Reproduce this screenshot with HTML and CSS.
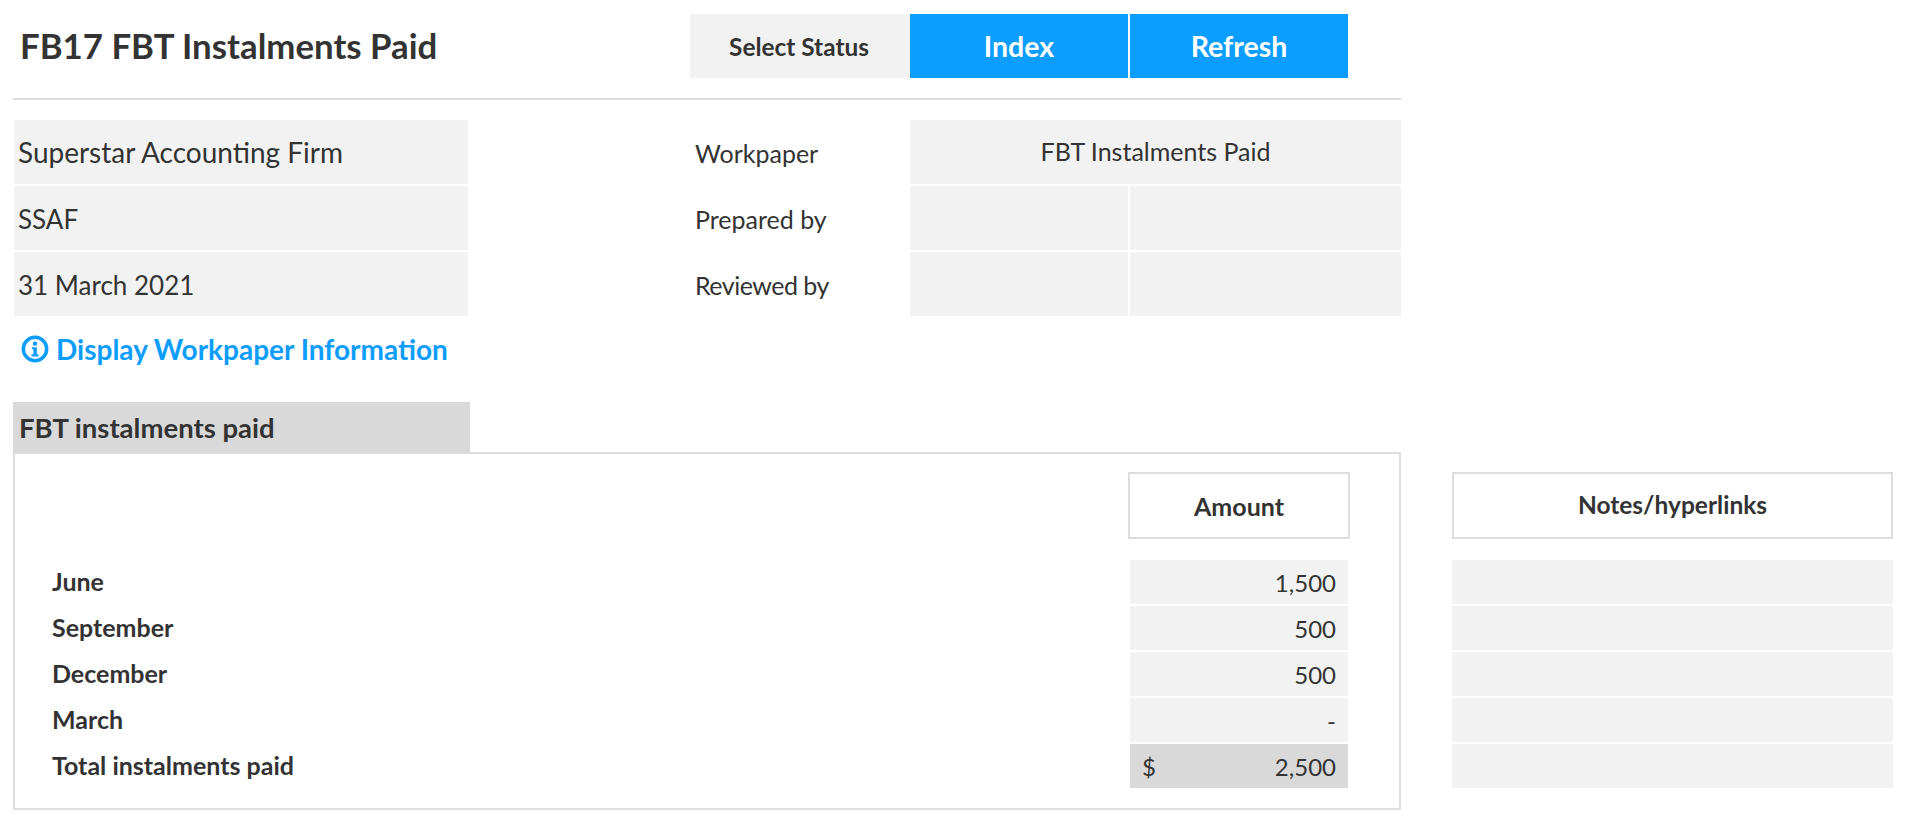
FILE: index.html
```html
<!DOCTYPE html>
<html lang="en">
<head>
    <meta charset="UTF-8">
    <meta name="viewport" content="width=device-width, initial-scale=1.0">
    <title>FB17 FBT Instalments Paid</title>
    <link rel="stylesheet" href="styles.css">
</head>
<body>
    <div class="sheet">
        <div class="header">
            <h1 class="title">FB17 FBT Instalments Paid</h1>
            <div class="status">Select Status</div>
            <div class="btn">Index</div>
            <div class="btn">Refresh</div>
        </div>

        <div class="info">
            <div class="client">
                <div class="client-cell">Superstar Accounting Firm</div>
                <div class="client-cell client-short">SSAF</div>
                <div class="client-cell client-short">31 March 2021</div>
            </div>
            <div class="signoff-labels">
                <div class="signoff-label">Workpaper</div>
                <div class="signoff-label">Prepared by</div>
                <div class="signoff-label signoff-tight">Reviewed by</div>
            </div>
            <div class="signoff">
                <div class="signoff-name">FBT Instalments Paid</div>
                <div class="signoff-cell"></div>
                <div class="signoff-cell"></div>
                <div class="signoff-cell"></div>
                <div class="signoff-cell"></div>
            </div>
        </div>

        <div class="info-link">
            <svg class="info-icon" viewBox="0 0 24 24" aria-hidden="true">
                <circle cx="12" cy="12" r="10" fill="none" stroke="#0b9dff" stroke-width="3"/>
                <circle cx="12" cy="7.4" r="1.9" fill="#0b9dff"/>
                <path d="M9.4 10.4h4.2v6.2h1.5v1.8H9v-1.8h1.6v-4.4H9.4z" fill="#0b9dff"/>
            </svg>
            Display Workpaper Information
        </div>

        <div class="section-title">FBT instalments paid</div>
        <div class="section">
            <div class="panel">
                <div class="row head-row">
                    <div class="row-label"></div>
                    <div class="head-cell amount-head">Amount</div>
                </div>
                <div class="row">
                    <div class="row-label">June</div>
                    <div class="amount">1,500</div>
                </div>
                <div class="row">
                    <div class="row-label">September</div>
                    <div class="amount">500</div>
                </div>
                <div class="row">
                    <div class="row-label">December</div>
                    <div class="amount">500</div>
                </div>
                <div class="row">
                    <div class="row-label">March</div>
                    <div class="amount">-</div>
                </div>
                <div class="row">
                    <div class="row-label">Total instalments paid</div>
                    <div class="amount total"><span>$</span><span>2,500</span></div>
                </div>
            </div>
            <div class="notes">
                <div class="head-cell notes-head">Notes/hyperlinks</div>
                <div class="note-cell"></div>
                <div class="note-cell"></div>
                <div class="note-cell"></div>
                <div class="note-cell"></div>
                <div class="note-cell"></div>
            </div>
        </div>
    </div>
</body>
</html>
```

FILE: styles.css
```css
body {
    font-family: Lato, "Open Sans", sans-serif;
    margin: 0;
    padding: 0;
    background-color: #fff;
    color: #333;
}
.sheet {
    padding: 14px 0 0 13px;
}
.header {
    display: flex;
    width: 1388px;
    height: 64px;
    padding-bottom: 20px;
    border-bottom: 2px solid #ddd;
}
.title {
    width: 677px;
    margin: 0;
    padding-left: 7px;
    box-sizing: border-box;
    font-size: 34.8px;
    font-weight: 700;
    line-height: 64px;
}
.status {
    width: 218px;
    padding-right: 2px;
    background: #f2f2f2;
    font-size: 24.4px;
    font-weight: 700;
    line-height: 66px;
    text-align: center;
}
.btn {
    width: 218px;
    margin-right: 2px;
    background: #0b9dff;
    color: #fff;
    font-size: 28.5px;
    font-weight: 700;
    line-height: 64px;
    text-align: center;
}
.info {
    display: flex;
    margin-top: 20px;
}
.client {
    display: flex;
    flex-direction: column;
    gap: 2px;
    width: 454px;
    margin: 0 222px 0 1px;
}
.client-cell {
    height: 64px;
    padding-left: 4px;
    background: #f2f2f2;
    font-size: 28px;
    line-height: 64px;
}
.client-short {
    font-size: 26px;
    line-height: 66px;
}
.signoff-labels {
    display: flex;
    flex-direction: column;
    gap: 2px;
    width: 220px;
}
.signoff-label {
    height: 64px;
    padding-left: 5px;
    font-size: 25px;
    line-height: 66px;
}
.signoff-tight {
    letter-spacing: -0.5px;
}
.signoff {
    display: grid;
    grid-template-columns: 218px 271px;
    grid-auto-rows: 64px;
    gap: 2px;
}
.signoff-name {
    grid-column: span 2;
    background: #f2f2f2;
    font-size: 25px;
    line-height: 62px;
    text-align: center;
}
.signoff-cell {
    background: #f2f2f2;
}
.info-link {
    display: flex;
    align-items: center;
    gap: 7px;
    height: 66px;
    padding-left: 8px;
    color: #0b9dff;
    font-size: 28px;
    font-weight: 700;
}
.info-icon {
    width: 28px;
    height: 28px;
}
.section-title {
    position: relative;
    z-index: 1;
    width: 451px;
    height: 51px;
    margin-top: 20px;
    padding-left: 6px;
    background: #d9d9d9;
    font-size: 27.5px;
    font-weight: 700;
    line-height: 52px;
}
.section {
    display: flex;
    align-items: flex-start;
    margin-top: -1px;
}
.panel {
    width: 1384px;
    height: 336px;
    padding-top: 18px;
    border: 2px solid #ddd;
}
.row {
    display: flex;
    height: 44px;
    margin-bottom: 2px;
}
.head-row {
    height: 67px;
    margin-bottom: 21px;
}
.row-label {
    width: 1113px;
    padding-left: 37px;
    box-sizing: border-box;
    font-size: 25px;
    font-weight: 700;
    line-height: 42px;
}
.head-cell {
    box-sizing: border-box;
    border: 2px solid #ddd;
    font-size: 25px;
    font-weight: 700;
    line-height: 65px;
    text-align: center;
}
.amount-head {
    width: 222px;
}
.amount {
    display: flex;
    justify-content: flex-end;
    width: 218px;
    margin-left: 2px;
    padding: 0 12px;
    box-sizing: border-box;
    background: #f2f2f2;
    font-size: 24px;
    line-height: 46px;
}
.total {
    justify-content: space-between;
    background: #d9d9d9;
}
.notes {
    width: 441px;
    margin-left: 51px;
    padding-top: 20px;
}
.notes-head {
    height: 67px;
    margin-bottom: 21px;
    font-size: 24.5px;
    line-height: 62px;
}
.note-cell {
    height: 44px;
    margin-bottom: 2px;
    background: #f2f2f2;
}
```
